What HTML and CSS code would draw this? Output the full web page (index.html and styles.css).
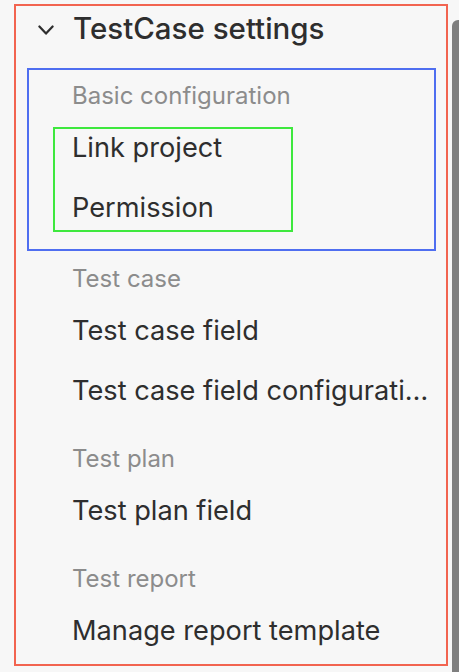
FILE: index.html
```html
<!DOCTYPE html>
<html lang="en">
<head>
<meta charset="utf-8">
<title>TestCase settings</title>
<link rel="stylesheet" href="styles.css">
</head>
<body>
<div class="panel">
  <div class="panel-head">
    <svg class="chev" width="16" height="10" viewBox="0 0 16 10" aria-hidden="true"><path d="M1.4 1.5 L8 8.6 L14.6 1.5" fill="none" stroke="#2e2e2e" stroke-width="2.2" stroke-linecap="round" stroke-linejoin="round"/></svg>
    <span class="panel-title">TestCase settings</span>
  </div>
  <div class="group group--first group--outlined">
    <div class="group-title">Basic configuration</div>
    <ul class="items items--outlined">
      <li class="item">Link project</li>
      <li class="item">Permission</li>
    </ul>
  </div>
  <div class="group">
    <div class="group-title">Test case</div>
    <ul class="items">
      <li class="item">Test case field</li>
      <li class="item">Test case field configuration</li>
    </ul>
  </div>
  <div class="group">
    <div class="group-title">Test plan</div>
    <ul class="items">
      <li class="item">Test plan field</li>
    </ul>
  </div>
  <div class="group">
    <div class="group-title">Test report</div>
    <ul class="items">
      <li class="item">Manage report template</li>
    </ul>
  </div>
</div>
<div class="scrollbar"></div>
</body>
</html>
```
FILE: styles.css
```css
html, body {
  margin: 0;
  background: #f7f7f7;
}
body {
  font-family: Inter, "Noto Sans", sans-serif;
  color: #2e2e2e;
}
.panel {
  box-sizing: border-box;
  margin: 4px 0 0 14px;
  width: 434px;
  height: 662px;
  border: 2px solid #f26450;
  overflow: hidden;
}
.panel-head {
  display: flex;
  align-items: center;
  height: 44px;
  padding-left: 22px;
}
.chev {
  margin-top: 3px;
  flex: none;
}
.panel-title {
  margin-left: 19px;
  font-size: 29.5px;
  font-weight: 500;
  line-height: 44px;
}
.group {
  margin: 0 10px 0 11px;
  padding: 12px 0 20px 27px;
}
.group--first {
  margin-top: 18px;
}
.group--outlined {
  outline: 2px solid #4f6ef0;
  outline-offset: -2px;
}
.group-title {
  padding-left: 18px;
  font-size: 24px;
  line-height: 32px;
  color: #8c8c8c;
}
.items {
  list-style: none;
  margin: 16px 0 0;
  padding: 0;
  display: flex;
  flex-direction: column;
  gap: 20px;
}
.items--outlined {
  width: 238px;
  padding-bottom: 3px;
  outline: 2px solid #3ee83e;
  outline-offset: -1px;
}
.item {
  padding: 0 4px 0 18px;
  font-size: 27.2px;
  line-height: 40px;
  white-space: nowrap;
  overflow: hidden;
  text-overflow: ellipsis;
}
.scrollbar {
  position: fixed;
  top: 20px;
  right: 0;
  bottom: 0;
  width: 7px;
  background: #7f7f7f;
  border-radius: 6px 0 0 0;
}
```
